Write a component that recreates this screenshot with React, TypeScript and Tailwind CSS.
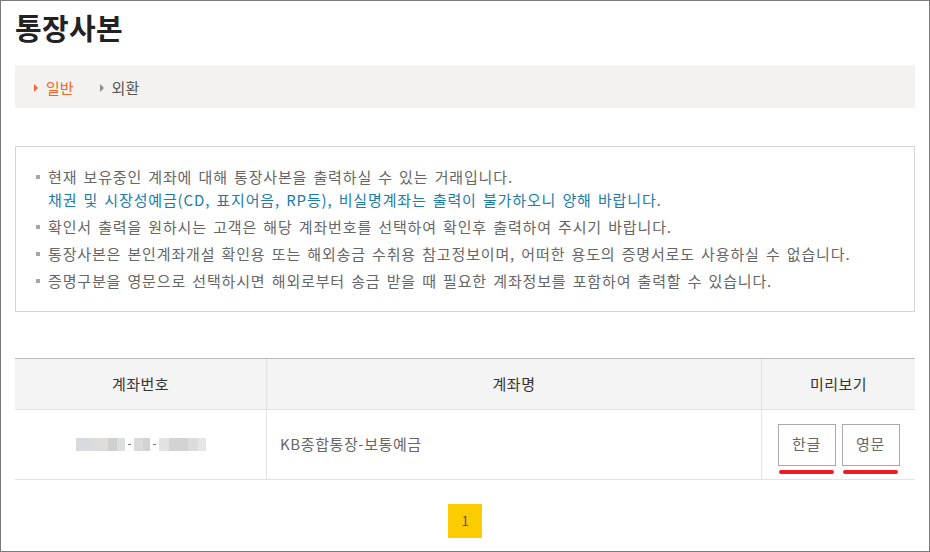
import React from "react";

const notices = [
  {
    lines: [
      { text: "현재 보유중인 계좌에 대해 통장사본을 출력하실 수 있는 거래입니다.", tone: "text-[#666666]" },
      { text: "채권 및 시장성예금(CD, 표지어음, RP등), 비실명계좌는 출력이 불가하오니 양해 바랍니다.", tone: "text-[#1b7ca8]" },
    ],
  },
  { lines: [{ text: "확인서 출력을 원하시는 고객은 해당 계좌번호를 선택하여 확인후 출력하여 주시기 바랍니다.", tone: "text-[#666666]" }] },
  { lines: [{ text: "통장사본은 본인계좌개설 확인용 또는 해외송금 수취용 참고정보이며, 어떠한 용도의 증명서로도 사용하실 수 없습니다.", tone: "text-[#666666]" }] },
  { lines: [{ text: "증명구분을 영문으로 선택하시면 해외로부터 송금 받을 때 필요한 계좌정보를 포함하여 출력할 수 있습니다.", tone: "text-[#666666]" }] },
];

function Triangle({ color }: { color: string }) {
  return (
    <svg width="4" height="8" viewBox="0 0 4 8" aria-hidden="true">
      <path d="M0 0 L4 4 L0 8 Z" fill={color} />
    </svg>
  );
}

function MaskedAccount() {
  return (
    <div className="flex items-center justify-center gap-[3px] blur-[0.6px]">
      <div className="flex h-[13px]">
        <span className="w-[16px] bg-[#d8dadd]" />
        <span className="w-[16px] bg-[#dedcda]" />
        <span className="w-[9px] bg-[#cfcfd1]" />
        <span className="w-[8px] bg-[#dcdee0]" />
      </div>
      <span className="h-px w-[3px] bg-[#777]" />
      <div className="flex h-[13px]">
        <span className="w-[9px] bg-[#dadada]" />
        <span className="w-[7px] bg-[#d2d3d6]" />
      </div>
      <span className="h-px w-[3px] bg-[#777]" />
      <div className="flex h-[13px]">
        <span className="w-[10px] bg-[#e2e2e2]" />
        <span className="w-[19px] bg-[#d3d3d3]" />
        <span className="w-[10px] bg-[#dcdcdc]" />
        <span className="w-[8px] bg-[#e6e6e6]" />
      </div>
    </div>
  );
}

function PreviewButton({ label }: { label: string }) {
  return (
    <div className="relative">
      <button
        type="button"
        className="flex h-[42px] w-[58px] items-center justify-center border border-[#a9a9a9] bg-white text-[15px] tracking-[0.6px] text-[#666666]"
      >
        {label}
      </button>
      <span className="absolute left-[1px] top-[46px] h-[4px] w-[55px] rounded-full bg-[#ee1c25]" />
    </div>
  );
}

export default function App() {
  return (
    <div className="box-border h-[552px] w-[930px] overflow-hidden border border-[#7b7b7b] bg-white px-[14px] pt-[6px] font-['Noto_Sans_CJK_KR','Noto_Sans',sans-serif]">
      <h1 className="text-[29px] font-bold leading-[40px] tracking-[0.3px] text-[#222222]">통장사본</h1>

      <div className="mt-[18px] flex h-[43px] items-center gap-[26px] bg-[#f3f2f1] pl-[19px] pt-[3px] text-[15px]">
        <div className="flex items-center gap-[8px] text-[#f26522]">
          <Triangle color="#f26522" />
          <span>일반</span>
        </div>
        <div className="flex items-center gap-[8px] text-[#555555]">
          <Triangle color="#8c8c8c" />
          <span>외환</span>
        </div>
      </div>

      <div className="mt-[38px] border border-[#d5d5d5] pb-[19px] pl-[20px] pr-[20px] pt-[18px]">
        <ul className="flex flex-col gap-[4px] text-[15px] leading-[23px] tracking-[0.85px] [word-spacing:2px]">
          {notices.map((item, i) => (
            <li key={i} className="flex">
              <span className="mr-[8px] mt-[10px] h-[4px] w-[4px] shrink-0 bg-[#aaa59f]" />
              <div>
                {item.lines.map((line) => (
                  <p key={line.text} className={line.tone}>
                    {line.text}
                  </p>
                ))}
              </div>
            </li>
          ))}
        </ul>
      </div>

      <div className="mt-[46px] border-t border-[#bdbdbd]">
        <div className="grid h-[51px] grid-cols-[252px_495px_1fr] border-b border-[#e3e3e3] bg-[#f4f4f4] text-[15px] tracking-[0.5px] text-[#333333]">
          <div className="flex items-center justify-center border-r border-[#e3e3e3]">계좌번호</div>
          <div className="flex items-center justify-center border-r border-[#e3e3e3]">계좌명</div>
          <div className="flex items-center justify-center">미리보기</div>
        </div>
        <div className="grid h-[70px] grid-cols-[252px_495px_1fr] border-b border-[#e3e3e3] text-[15px] tracking-[0.6px] text-[#666666]">
          <div className="flex items-center justify-center border-r border-[#e3e3e3]">
            <MaskedAccount />
          </div>
          <div className="flex items-center border-r border-[#e3e3e3] pl-[13px]">KB종합통장-보통예금</div>
          <div className="flex items-center justify-center gap-[6px]">
            <PreviewButton label="한글" />
            <PreviewButton label="영문" />
          </div>
        </div>
      </div>

      <div className="mt-[24px] flex justify-center">
        <span className="flex h-[34px] w-[34px] items-center justify-center bg-[#fccb00] text-[13px] text-[#555555]">
          1
        </span>
      </div>
    </div>
  );
}
